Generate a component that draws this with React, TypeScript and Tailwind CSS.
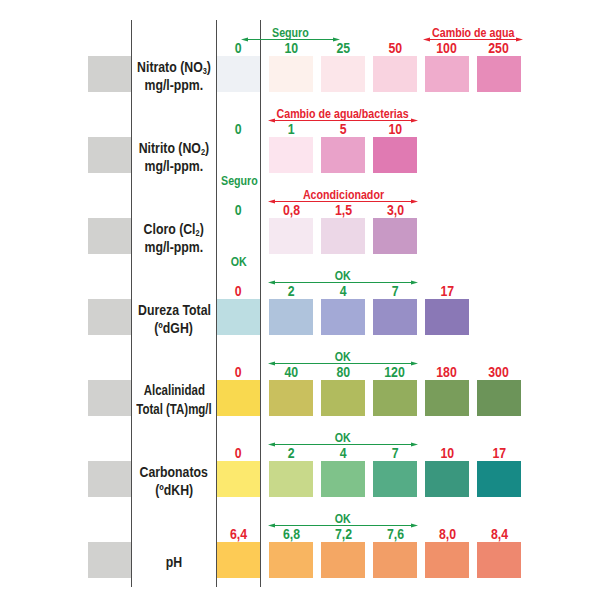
import React from "react";

const GREEN = "text-[#1e9b4c]";
const RED = "text-[#e52330]";

type Mark = { v: string; ok: boolean };

interface Span {
	text: string;
	ok: boolean;
	width: number;
	ml: string;
}

interface TestRow {
	label: React.ReactNode[];
	small?: boolean;
	zero: Mark;
	zeroColor?: string;
	topNote?: string;
	spans: Span[];
	marks: Mark[];
	colors: string[];
}

const g = (v: string): Mark => ({ v, ok: true });
const r = (v: string): Mark => ({ v, ok: false });

// narrow look: Liberation Sans squeezed like Arial Narrow
function N(props: { children: React.ReactNode }) {
	return <span className="inline-block whitespace-nowrap scale-x-[0.82]">{props.children}</span>;
}

const sub = (d: string) => <sub className="text-[9px] leading-none">{d}</sub>;

const rows: TestRow[] = [
	{
		label: [<>Nitrato (NO{sub("3")})</>, "mg/l-ppm."],
		zero: g("0"),
		zeroColor: "#eef1f5",
		spans: [
			{ text: "Seguro", ok: true, width: 99, ml: "ml-[-28px]" },
			{ text: "Cambio de agua", ok: false, width: 100, ml: "ml-[83px]" },
		],
		marks: [g("10"), g("25"), r("50"), r("100"), r("250")],
		colors: ["#fdf1ec", "#fce6ea", "#f9d3e0", "#efaccc", "#e78cb9"],
	},
	{
		label: [<>Nitrito (NO{sub("2")})</>, "mg/l-ppm."],
		zero: g("0"),
		spans: [{ text: "Cambio de agua/bacterias", ok: false, width: 150, ml: "ml-[-1px]" }],
		marks: [g("1"), r("5"), r("10")],
		colors: ["#fce4ee", "#e9a2c9", "#e07ab2"],
	},
	{
		label: [<>Cloro (Cl{sub("2")})</>, "mg/l-ppm."],
		zero: g("0"),
		topNote: "Seguro",
		spans: [{ text: "Acondicionador", ok: false, width: 150, ml: "ml-[-1px]" }],
		marks: [r("0,8"), r("1,5"), r("3,0")],
		colors: ["#f5e8f1", "#ecd7e7", "#c899c5"],
	},
	{
		label: ["Dureza Total", "(ºdGH)"],
		zero: r("0"),
		zeroColor: "#bcdde2",
		topNote: "OK",
		spans: [{ text: "OK", ok: true, width: 150, ml: "ml-[-1px]" }],
		marks: [g("2"), g("4"), g("7"), r("17")],
		colors: ["#afc3dc", "#a3a9d6", "#978fc6", "#8a78b6"],
	},
	{
		label: ["Alcalinidad", "Total (TA)mg/l"],
		small: true,
		zero: r("0"),
		zeroColor: "#f9d94f",
		spans: [{ text: "OK", ok: true, width: 150, ml: "ml-[-1px]" }],
		marks: [g("40"), g("80"), g("120"), r("180"), r("300")],
		colors: ["#c9c05e", "#b1bb5e", "#93ad5d", "#799d5b", "#6c9459"],
	},
	{
		label: ["Carbonatos", "(ºdKH)"],
		zero: r("0"),
		zeroColor: "#fce96e",
		spans: [{ text: "OK", ok: true, width: 150, ml: "ml-[-1px]" }],
		marks: [g("2"), g("4"), g("7"), r("10"), r("17")],
		colors: ["#c8d98a", "#7fc28a", "#55ac86", "#3a977e", "#178a86"],
	},
	{
		label: ["pH"],
		zero: r("6,4"),
		zeroColor: "#fdcb55",
		spans: [{ text: "OK", ok: true, width: 150, ml: "ml-[-1px]" }],
		marks: [g("6,8"), g("7,2"), g("7,6"), r("8,0"), r("8,4")],
		colors: ["#f8b561", "#f4a764", "#f29e67", "#f0916a", "#ee886f"],
	},
];

function Arrow(props: { width: number; color: string }) {
	const w = props.width;
	return (
		<svg width={w} height={5} viewBox={`0 0 ${w} 5`} className="block">
			<line x1={4} y1={2.5} x2={w - 4} y2={2.5} stroke={props.color} strokeWidth={1} />
			<polygon points={`0,2.5 7,0.5 7,4.5`} fill={props.color} />
			<polygon points={`${w},2.5 ${w - 7},0.5 ${w - 7},4.5`} fill={props.color} />
		</svg>
	);
}

function Row({ row }: { row: TestRow }) {
	return (
		<div className="flex h-[81px]">
			<div className="w-[43px] pt-[36px]">
				<div className="h-[36px] bg-[#d1d1cf]"></div>
			</div>
			<div className="w-[85px] border-l border-[#4d4d4d] pt-[36px]">
				<div
					className={`h-[36px] flex flex-col items-center justify-center text-center font-bold text-[#231f20] pt-[3px] ${
						row.small ? "text-[14px] leading-[19px]" : "text-[15px] leading-[18px]"
					}`}
				>
					{row.label.map((l, i) => (
						<N key={i}>{l}</N>
					))}
				</div>
			</div>
			<div className="relative w-[44px] border-l border-[#4d4d4d]">
				{row.topNote && (
					<div className={`absolute -top-[8px] inset-x-0 text-center text-[13px] leading-[14px] font-bold ${GREEN}`}>
						<N>{row.topNote}</N>
					</div>
				)}
				<div className="h-[36px] flex flex-col justify-end pb-[1px]">
					<div
						className={`text-center text-[15px] leading-[14px] font-bold ${row.zero.ok ? GREEN : RED}`}
					>
						<N>{row.zero.v}</N>
					</div>
				</div>
				{row.zeroColor && (
					<div className="h-[36px]" style={{ background: row.zeroColor }}></div>
				)}
			</div>
			<div className="border-l border-[#4d4d4d] pl-[8px]">
				<div className="h-[36px] pt-[6px] flex flex-col">
					<div className="flex">
						{row.spans.map((s, i) => (
							<div key={i} className={`flex flex-col items-center ${s.ml}`} style={{ width: s.width }}>
								<div className={`h-[13px] text-[13px] leading-[13px] font-bold ${s.ok ? GREEN : RED}`}>
									<N>{s.text}</N>
								</div>
								<div className="-mt-[2px]">
									<Arrow width={s.width} color={s.ok ? "#1e9b4c" : "#e52330"} />
								</div>
							</div>
						))}
					</div>
					<div className="flex gap-2 -mt-[1px]">
						{row.marks.map((m, i) => (
							<div
								key={i}
								className={`w-[44px] h-[14px] text-center text-[15px] leading-[14px] font-bold ${m.ok ? GREEN : RED}`}
							>
								<N>{m.v}</N>
							</div>
						))}
					</div>
				</div>
				<div className="flex gap-2">
					{row.colors.map((c, i) => (
						<div key={i} className="w-[44px] h-[36px]" style={{ background: c }}></div>
					))}
				</div>
			</div>
		</div>
	);
}

export default function App() {
	return (
		<div
			className="w-[600px] h-[600px] bg-white pt-[20px] pl-[88px] overflow-hidden"
			style={{ fontFamily: "'Liberation Sans', Arial, sans-serif" }}
		>
			{rows.map((row, i) => (
				<Row key={i} row={row} />
			))}
		</div>
	);
}
